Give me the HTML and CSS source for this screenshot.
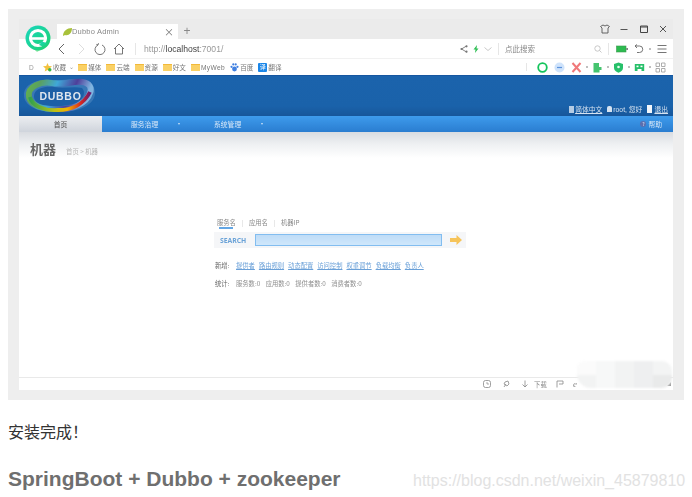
FILE: index.html
```html
<!DOCTYPE html>
<html lang="zh">
<head>
<meta charset="utf-8">
<title>SpringBoot + Dubbo + zookeeper</title>
<link rel="stylesheet" href="styles.css">
</head>
<body>
<div class="frame">
  <div class="shot">
    <svg class="app-logo" viewBox="0 0 26 28"><defs><linearGradient id="eg" x1="0" y1="0" x2="1" y2="1"><stop offset="0" stop-color="#19d6c0"/><stop offset="1" stop-color="#1ed26c"/></linearGradient></defs><path d="M9 24 L12 27 L17 24Z" fill="#9ae8a8"/><circle cx="13" cy="13" r="12.5" fill="url(#eg)"/><circle cx="13" cy="13" r="7.6" fill="none" stroke="#fff" stroke-width="3"/><path d="M5.5 13.5 H21" stroke="#fff" stroke-width="2.6"/><path d="M17 16.5 L23 18.5 L19 22 L14 20Z" fill="url(#eg)"/></svg>

    <div class="tabstrip">
      <div class="tab">
        <svg class="leaf" viewBox="0 0 9 8"><path d="M0 8 C0 3 4 0 9 0 C9 5 6 8 2 7Z" fill="#a8c13a"/></svg>
        <span class="tab-title">Dubbo Admin</span>
        <span class="tab-x">×</span>
      </div>
      <span class="tab-plus">+</span>
      <div class="win-ctrls">
        <svg class="ic" viewBox="0 0 10 10"><path d="M3 1 L5 2 L7 1 L9.5 2.5 L8 4 V9 H2 V4 L.5 2.5Z" fill="none" stroke="#555" stroke-width=".9"/></svg>
        <svg class="ic" viewBox="0 0 10 10"><path d="M1.5 5.5 H8.5" stroke="#555" stroke-width="1"/></svg>
        <svg class="ic" viewBox="0 0 10 10"><path d="M1.5 2 H8.5 V8.5 H1.5Z M1.5 3 H8.5" fill="none" stroke="#444" stroke-width="1"/></svg>
        <svg class="ic" viewBox="0 0 10 10"><path d="M2 2 L8 8 M8 2 L2 8" stroke="#555" stroke-width="1"/></svg>
      </div>
    </div>

    <div class="addr">
      <div class="nav-icons">
        <svg class="ic-l" viewBox="0 0 12 12"><path d="M8 1 L3 6 L8 11" fill="none" stroke="#666" stroke-width="1"/></svg>
        <svg class="ic-l" viewBox="0 0 12 12"><path d="M4 1 L9 6 L4 11" fill="none" stroke="#ddd" stroke-width="1"/></svg>
        <svg class="ic-l" viewBox="0 0 12 12"><path d="M4 2 A5 5 0 1 0 8 2 M4 2 L4.5 .2 M4 2 L2.4 1.4" fill="none" stroke="#666" stroke-width=".9"/></svg>
        <svg class="ic-l" viewBox="0 0 12 12"><path d="M1 6 L6 1 L11 6 M2.5 5 V11 H9.5 V5" fill="none" stroke="#666" stroke-width=".9"/></svg>
      </div>
      <span class="vsep url-sep"></span>
      <span class="url">http://<b>localhost</b>:7001/</span>
      <div class="addr-tools">
        <svg class="ic-s" viewBox="0 0 8 8"><path d="M6.5 1 L1.5 4 L6.5 7" fill="none" stroke="#777" stroke-width=".9"/><circle cx="6.5" cy="1.3" r="1.1" fill="#777"/><circle cx="1.5" cy="4" r="1.1" fill="#777"/><circle cx="6.5" cy="6.7" r="1.1" fill="#777"/></svg>
        <svg class="ic-s bolt" viewBox="0 0 8 8"><path d="M5 0 L1.5 4.5 H3.5 L3 8 L6.5 3.5 H4.5Z" fill="#2fbf55"/></svg>
        <svg class="ic-s" viewBox="0 0 8 8"><path d="M.5 2.5 L4 5.5 L7.5 2.5" fill="none" stroke="#bbb" stroke-width=".8"/></svg>
        <span class="vsep"></span>
        <span class="search-ph">点此搜索</span>
        <svg class="ic-s lens" viewBox="0 0 8 8"><circle cx="3.5" cy="3.5" r="2.7" fill="none" stroke="#bbb" stroke-width=".8"/><path d="M5.5 5.5 L7.5 7.5" stroke="#bbb" stroke-width=".8"/></svg>
        <span class="vsep"></span>
        <svg class="battery" viewBox="0 0 12 8"><rect x=".5" y="1" width="9.5" height="6" fill="#2dbb50" stroke="#3a9a4e" stroke-width=".6"/><rect x="10.4" y="3" width="1.4" height="2" fill="#666"/></svg>
        <svg class="ic undo" viewBox="0 0 10 10"><path d="M1 2 H5.5 A3 3 0 0 1 5.5 8.5 H3 M1 2 L3 .5 M1 2 L3 4" fill="none" stroke="#666" stroke-width=".9"/></svg>
        <span class="mini-dot"></span>
        <svg class="ic menu" viewBox="0 0 10 10"><path d="M.5 1.5 H9.5 M.5 5 H9.5 M.5 8.5 H9.5" stroke="#666" stroke-width=".9"/></svg>
      </div>
    </div>

    <div class="bookmarks">
      <span class="bm-toggle">D</span>
      <span class="bm bm-fav"><svg class="bm-ic" viewBox="0 0 9 9"><path d="M4.5 0 L5.8 3 L9 3.3 L6.5 5.4 L7.3 8.6 L4.5 7 L1.7 8.6 L2.5 5.4 L0 3.3 L3.2 3Z" fill="#f3c23f"/><circle cx="6.8" cy="6.8" r="1.7" fill="#39b54a"/></svg>收藏 <i class="caret">⌄</i></span>
      <span class="bm"><i class="folder"></i>媒体</span>
      <span class="bm"><i class="folder"></i>云端</span>
      <span class="bm"><i class="folder"></i>资源</span>
      <span class="bm"><i class="folder"></i>好文</span>
      <span class="bm bm-latin"><i class="folder"></i>MyWeb</span>
      <span class="bm"><svg class="bm-ic" viewBox="0 0 9 9"><circle cx="4.5" cy="6" r="2.4" fill="#3f7fe0"/><circle cx="1.5" cy="3.8" r="1.1" fill="#3f7fe0"/><circle cx="7.5" cy="3.8" r="1.1" fill="#3f7fe0"/><circle cx="3.3" cy="1.4" r="1.1" fill="#3f7fe0"/><circle cx="5.7" cy="1.4" r="1.1" fill="#3f7fe0"/></svg>百度</span>
      <span class="bm"><i class="fanyi">译</i>翻译</span>
      <div class="ext">
        <span class="vsep ext-sep"></span>
        <svg class="ic" viewBox="0 0 11 11"><circle cx="5.5" cy="5.5" r="4.3" fill="none" stroke="#14c45c" stroke-width="1.8"/></svg>
        <svg class="ic" viewBox="0 0 11 11"><circle cx="5.5" cy="5.5" r="5" fill="#cfe3fb"/><path d="M3 5.5 H8" stroke="#5b93dc" stroke-width="1.2"/></svg>
        <svg class="ic" viewBox="0 0 11 11"><path d="M1.5 1 L9.5 10 M9.5 1 L1.5 10" stroke="#f0787a" stroke-width="2"/></svg>
        <span class="mini-dot"></span>
        <svg class="ic" viewBox="0 0 11 11"><path d="M1.5 1 H7 V5 H9.5 V8 H7.5 V10.5 H1.5Z" fill="#45c46f"/></svg>
        <span class="mini-dot"></span>
        <svg class="ic" viewBox="0 0 11 11"><path d="M5.5 .5 L10 2 V6 C10 8.5 7.5 10 5.5 10.8 C3.5 10 1 8.5 1 6 V2Z" fill="#27c06a"/><circle cx="5.5" cy="5" r="1.3" fill="#e8fff0"/></svg>
        <span class="mini-dot"></span>
        <svg class="ic" viewBox="0 0 11 11"><path d="M.8 2 H10.2 V9 H7.5 V7 H3.5 V9 H.8Z" fill="#27c06a"/><rect x="2.5" y="3.6" width="2" height="1.6" fill="#fff"/><rect x="6.5" y="3.6" width="2" height="1.6" fill="#fff"/></svg>
        <span class="mini-dot"></span>
        <svg class="ic" viewBox="0 0 11 11"><path d="M1 1 H4.5 V4.5 H1Z M6.5 1 H10 V4.5 H6.5Z M1 6.5 H4.5 V10 H1Z M6.5 6.5 H10 V10 H6.5Z" fill="none" stroke="#999" stroke-width=".8"/></svg>
      </div>
    </div>

    <div class="banner">
      <svg class="dubbo-logo" viewBox="0 0 74 37">
        <defs>
          <linearGradient id="ring" x1="0" y1="0" x2="1" y2="0.2">
            <stop offset="0" stop-color="#62b24a"/>
            <stop offset=".18" stop-color="#5aa060"/>
            <stop offset=".45" stop-color="#3fa8d8"/>
            <stop offset=".75" stop-color="#4e3f9a"/>
            <stop offset="1" stop-color="#7fb4e0"/>
          </linearGradient>
          <linearGradient id="ring2" x1="0" y1="0" x2="1" y2="0">
            <stop offset="0" stop-color="#31a24c"/>
            <stop offset=".4" stop-color="#b8c018"/>
            <stop offset=".62" stop-color="#f2b500"/>
            <stop offset=".85" stop-color="#d8261e"/>
            <stop offset="1" stop-color="#6a1c70"/>
          </linearGradient>
        </defs>
        <path d="M2 18 C2 6 18 2 28 3 C38 4 44 2 54 2 C68 2 73 8 73 16 C73 28 56 35 38 35 C18 36 2 30 2 18Z" fill="#5d93c6" opacity=".45"/>
        <path d="M7 20 C5 9 20 4 30 6 C42 8 50 4 60 5 C68 6 70 11 68 16 C65 26 50 33 36 32 C20 32 9 29 7 20Z" fill="none" stroke="url(#ring)" stroke-width="6"/>
        <path d="M8 20 C10 29 22 34 36 33 C50 33 62 27 68 15" fill="none" stroke="url(#ring2)" stroke-width="3.8"/>
        <path d="M12 19 C12 11 24 9 32 10 C42 12 52 9 60 11 C64 15 62 22 54 26 C44 30 26 30 18 27 C14 25 12 23 12 19Z" fill="#1c5fa6"/>
        <text x="38.5" y="23" class="dubbo-text" text-anchor="middle">DUBBO</text>
      </svg>
      <div class="banner-links">
        <span class="blink blink-lang"><i class="doc"></i>简体中文</span>
        <span class="blink blink-user"><i class="usr"></i>root, 您好</span>
        <span class="blink"><i class="exit"></i>退出</span>
      </div>
    </div>

    <div class="navbar">
      <span class="nav-home">首页</span>
      <span class="nav-item">服务治理</span><i class="nav-tri"></i>
      <span class="nav-item nav-item-2">系统管理</span><i class="nav-tri"></i>
      <span class="nav-help"><i class="help-ic">?</i>帮助</span>
    </div>

    <div class="main">
      <div class="page-head">
        <h1 class="page-title">机器</h1>
        <span class="crumb">首页 &gt; 机器</span>
      </div>
      <div class="search-block">
        <div class="search-tabs">
          <span class="stab stab-on">服务名</span><span class="stab-sep">|</span>
          <span class="stab">应用名</span><span class="stab-sep">|</span>
          <span class="stab">机器IP</span>
        </div>
        <div class="search-row">
          <span class="search-label">SEARCH</span>
          <span class="search-input"></span>
          <svg class="go" viewBox="0 0 12 10"><path d="M0 3 H6.5 V0 L12 5 L6.5 10 V7 H0Z" fill="#f6c45a"/></svg>
        </div>
        <div class="line line-links">
          <span class="line-label">新增:</span>
          <a class="lk">提供者</a><a class="lk">路由规则</a><a class="lk">动态配置</a><a class="lk">访问控制</a><a class="lk">权重调节</a><a class="lk">负载均衡</a><a class="lk">负责人</a>
        </div>
        <div class="line line-stats">
          <span class="line-label">统计:</span>
          <span class="st">服务数:0</span><span class="st">应用数:0</span><span class="st">提供者数:0</span><span class="st">消费者数:0</span>
        </div>
      </div>
    </div>

    <div class="statusbar">
      <svg class="st-ic" viewBox="0 0 8 8"><rect x=".5" y=".5" width="7" height="7" rx="2" fill="none" stroke="#888" stroke-width=".8"/><path d="M4 2 V4 H6" fill="none" stroke="#888" stroke-width=".7"/></svg>
      <svg class="st-ic" viewBox="0 0 8 8"><path d="M2 7 L4 4 M3 2 L6 1 L7 4 L5 6 L2 4Z" fill="none" stroke="#888" stroke-width=".8"/></svg>
      <svg class="st-ic" viewBox="0 0 8 8"><path d="M4 .5 V7 M1.5 4.5 L4 7 L6.5 4.5" fill="none" stroke="#888" stroke-width=".8"/></svg>
      <span class="dl">下载</span>
      <svg class="st-ic" viewBox="0 0 8 8"><path d="M1 7.5 V1 H7 V4 H3" fill="none" stroke="#888" stroke-width=".8"/></svg>
      <span class="st-e">e</span>
      <svg class="resize" viewBox="0 0 6 6"><path d="M5 1 V5 H1Z" fill="#999"/></svg>
    </div>
    <div class="mosaic">
      <i class="m a"></i><i class="m b"></i><i class="m c"></i><i class="m d"></i><i class="m e"></i>
      <i class="m c"></i><i class="m b"></i><i class="m c"></i><i class="m d"></i><i class="m f"></i>
    </div>
  </div>
</div>

<p class="done">安装完成！</p>
<div class="title-row">
  <h2 class="heading">SpringBoot + Dubbo + zookeeper</h2>
  <span class="mark">https://blog.csdn.net/weixin_45879810</span>
</div>
</body>
</html>
```
FILE: styles.css
```css
* { box-sizing: border-box; }
html, body { margin: 0; padding: 0; }
body {
  width: 692px;
  height: 497px;
  overflow: hidden;
  background: #fff;
  font-family: "Liberation Sans", "Noto Sans CJK SC", sans-serif;
}
i { font-style: normal; }

.frame {
  width: 676px;
  height: 391px;
  margin: 9px 0 0 8px;
  padding: 10px 11px;
  background: #eeeeee;
}
.shot {
  position: relative;
  width: 654px;
  height: 371px;
  display: flex;
  flex-direction: column;
  background: #fff;
  filter: blur(.45px);
  color: #666;
  font-family: "Noto Sans CJK SC", "Liberation Sans", sans-serif;
}

.app-logo { position: absolute; left: 6px; top: 6px; width: 26px; height: 28px; z-index: 2; }

/* tab strip */
.tabstrip {
  height: 20px;
  flex: none;
  background: #ebebeb;
  display: flex;
  align-items: flex-end;
  padding-left: 38px;
}
.tab {
  width: 121px;
  height: 15px;
  background: #fff;
  display: flex;
  align-items: center;
  padding: 0 4px 0 6px;
  font-size: 7.5px;
  color: #888;
}
.leaf { width: 9px; height: 8px; }
.tab-title { flex: 1; font-family: "Liberation Sans", sans-serif; letter-spacing: .2px; }
.tab-x { font-size: 10px; color: #777; line-height: 1; }
.tab-plus { width: 18px; text-align: center; font-size: 12px; line-height: 15px; color: #888; font-family: "Liberation Sans", sans-serif; }
.win-ctrls {
  margin-left: auto;
  align-self: center;
  display: flex;
  gap: 9.5px;
  padding-right: 5px;
}
.ic { width: 10px; height: 10px; flex: none; }
.ic-l { width: 12px; height: 12px; flex: none; }
.ic-s { width: 8px; height: 8px; flex: none; }

/* address */
.addr {
  height: 20px;
  flex: none;
  background: #fff;
  border-bottom: 1px solid #f1f1f1;
  display: flex;
  align-items: center;
  padding-left: 37px;
}
.nav-icons { display: flex; gap: 7px; }
.vsep { width: 1px; height: 12px; background: #e6e6e6; flex: none; display: block; }
.url-sep { margin: 0 8px 0 10px; }
.url { font-family: "Liberation Sans", sans-serif; font-size: 8.6px; color: #999; }
.url b { font-weight: 400; color: #444; }
.addr-tools { margin-left: auto; display: flex; align-items: center; padding-right: 6px; }
.bolt { margin: 0 0 0 4px; }
.addr-tools .ic-s:nth-child(3) { margin: 0 6px 0 4px; }
.search-ph { width: 95px; padding-left: 6px; font-size: 7.5px; color: #888; }
.lens { margin-right: 6px; }
.battery { width: 12px; height: 8px; margin: 0 6px 0 7px; }
.undo { margin-right: 1px; }
.menu { margin-left: 2px; }
.mini-dot { width: 2px; height: 2px; border-radius: 50%; background: #aaa; flex: none; margin: 0 4px; }

/* bookmarks */
.bookmarks {
  height: 16px;
  flex: none;
  background: #fff;
  display: flex;
  align-items: center;
  padding-left: 10px;
  font-size: 6.6px;
  color: #777;
  gap: 5px;
}
.bm-toggle { width: 9px; font-family: "Liberation Sans", sans-serif; font-size: 6.5px; color: #999; }
.bm { display: flex; align-items: center; gap: 1px; white-space: nowrap; font-family: "Liberation Sans", "Noto Sans CJK SC", sans-serif; }
.bm-fav { margin-right: -1px; }
.bm-latin { letter-spacing: .4px; }
.bm-ic { width: 9px; height: 9px; }
.caret { font-size: 6px; color: #999; margin-left: 2px; line-height: 6px; }
.folder {
  width: 9px;
  height: 7px;
  background: #fad166;
  border-top: 1px solid #f2b93a;
  display: block;
}
.fanyi {
  width: 9px;
  height: 9px;
  background: #1a86e8;
  color: #fff;
  font-size: 6px;
  line-height: 9px;
  text-align: center;
  display: block;
  border-radius: 1px;
}
.ext { margin-left: auto; display: flex; align-items: center; padding-right: 4px; }
.ext .mini-dot { margin: 0 1px; }
.ext-sep { margin-right: 7px; height: 8px; }
.ext .ic { width: 11px; height: 11px; margin: 0 3px; }

/* banner */
.banner {
  height: 41px;
  flex: none;
  background: linear-gradient(#1b63ac 0, #1a62aa 75%, #17569a 100%);
  border-top: 1px solid #1656a0;
  display: flex;
  align-items: flex-end;
  justify-content: space-between;
  padding: 0 5px 1px 3px;
}
.dubbo-logo { width: 74px; height: 37px; align-self: center; }
.dubbo-text { font-family: "Liberation Sans", sans-serif; font-weight: 700; font-size: 10.5px; fill: #dfe6ee; letter-spacing: .7px; }
.banner-links { display: flex; gap: 5px; font-size: 6.8px; color: #d5e3f1; padding-bottom: 1px; font-family: "Liberation Sans", "Noto Sans CJK SC", sans-serif; }
.blink { display: flex; align-items: center; gap: 1px; white-space: nowrap; text-decoration: underline; text-underline-offset: 1px; }
.blink-user { text-decoration: none; }
.doc { width: 5px; height: 7px; background: #b5cce4; display: block; }
.usr { width: 5px; height: 6px; background: #d5e3f1; border-radius: 2px 2px 0 0; display: block; }
.exit { width: 5px; height: 8px; background: #f2f6fb; display: block; margin-right: 1px; }

/* nav bar */
.navbar {
  height: 16px;
  flex: none;
  display: flex;
  align-items: center;
  background: linear-gradient(#3e9bec, #2a7dd0);
  font-size: 6.8px;
  color: #d8e8f8;
}
.nav-home {
  width: 83px;
  height: 16px;
  line-height: 16px;
  text-align: center;
  color: #555;
  background: linear-gradient(#eceef1, #cfd4dc);
  flex: none;
  font-weight: 500;
}
.nav-item { margin-left: 29px; width: 27px; white-space: nowrap; }
.nav-item-2 { margin-left: 34px; }
.nav-tri {
  width: 0;
  height: 0;
  margin-left: 20px;
  border: 1.5px solid transparent;
  border-top: 2px solid #cfe4f8;
  border-bottom: 0;
}
.nav-help { margin-left: auto; padding-right: 11px; display: flex; align-items: center; gap: 2px; }
.help-ic { width: 6px; height: 6px; border-radius: 50%; background: #5b6fb0; font-size: 5px; line-height: 6px; text-align: center; color: #d8e8f8; display: block; }

/* main */
.main {
  flex: 1;
  min-height: 0;
  background: linear-gradient(#d9dce1 0, #eef0f2 12px, #fff 26px);
  border-bottom: 1px solid #e9e9e9;
}
.page-head {
  display: flex;
  align-items: flex-end;
  padding: 8px 0 0 11px;
  height: 26px;
}
.page-title { margin: 0; font-size: 13px; line-height: 18px; font-weight: 700; color: #666; }
.crumb { font-size: 6.4px; line-height: 12px; color: #b4b4b4; margin-left: 10px; }

.search-block { margin: 58px 0 0 195px; width: 252px; font-size: 6.3px; color: #8a8a8a; }
.search-tabs { display: flex; align-items: center; height: 12px; padding-left: 3px; }
.stab { width: 19px; white-space: nowrap; position: relative; color: #888; }
.stab-on::after { content: ""; position: absolute; left: 2px; right: 3px; bottom: -2px; height: 1.5px; background: #63a6e4; }
.stab-sep { width: 13px; text-align: center; color: #ccc; }
.search-row {
  margin-top: 4px;
  height: 16px;
  background: #f5f6f8;
  display: flex;
  align-items: center;
  padding-left: 6px;
}
.search-label { width: 35px; font-size: 6.8px; font-weight: 700; color: #6ba3d8; font-family: "Open Sans", "Liberation Sans", sans-serif; }
.search-input { width: 187px; height: 12px; background: linear-gradient(#bfdcf7, #cfe7fb); border: 1px solid #82bdf0; }
.go { width: 12px; height: 10px; margin-left: 8px; }
.line { display: flex; align-items: center; }
.line-links { margin-top: 11px; height: 12px; }
.line-stats { margin-top: 6px; height: 12px; }
.line-label { width: 21px; margin-left: 1px; color: #666; white-space: nowrap; }
.lk { margin-right: 4px; color: #6aa0d8; text-decoration: underline; text-underline-offset: 1px; white-space: nowrap; }
.st { margin-right: 5.5px; white-space: nowrap; color: #8e8e8e; }

/* status bar */
.statusbar {
  height: 12px;
  flex: none;
  background: #fff;
  display: flex;
  align-items: center;
  padding-left: 464px;
  font-size: 6.4px;
  color: #888;
}
.st-ic { width: 8px; height: 8px; flex: none; margin-right: 9px; }
.st-ic:nth-child(2) { margin-right: 11px; }
.st-ic:nth-child(1) { margin-right: 11px; }
.st-ic:nth-child(3) { margin-right: 5px; }
.dl { width: 13px; margin-right: 9px; white-space: nowrap; }
.st-e { font-family: "Liberation Serif", serif; font-style: italic; font-size: 9px; }
.resize { width: 6px; height: 6px; margin-left: auto; margin-right: 1px; }

.mosaic {
  position: absolute;
  left: 558px;
  top: 342px;
  width: 95px;
  height: 27px;
  display: grid;
  grid-template-columns: repeat(5, 1fr);
  grid-template-rows: repeat(2, 1fr);
  border-radius: 8px 10px 10px 14px;
  overflow: hidden;
  filter: blur(1px);
}
.m { display: block; }
.a { background: #fbfbfb; }
.b { background: #f7f8f8; }
.c { background: #f2f3f3; }
.d { background: #eeeff0; }
.e { background: #f3f4f4; }
.f { background: #e9eaea; }

/* article text */
.done {
  margin: 22px 0 0 8px;
  height: 18px;
  font-size: 16px;
  line-height: 18px;
  color: #333;
  font-family: "Noto Sans CJK SC", sans-serif;
  font-weight: 400;
}
.title-row {
  display: flex;
  align-items: baseline;
  margin: 27px 0 0 8px;
  height: 24px;
  white-space: nowrap;
}
.heading {
  margin: 0;
  width: 405px;
  flex: none;
  font-family: "Liberation Sans", sans-serif;
  font-size: 21px;
  line-height: 24px;
  font-weight: 700;
  color: #6f6f6f;
}
.mark {
  font-family: "Liberation Sans", sans-serif;
  font-size: 16px;
  color: #e2e2e2;
}
```
